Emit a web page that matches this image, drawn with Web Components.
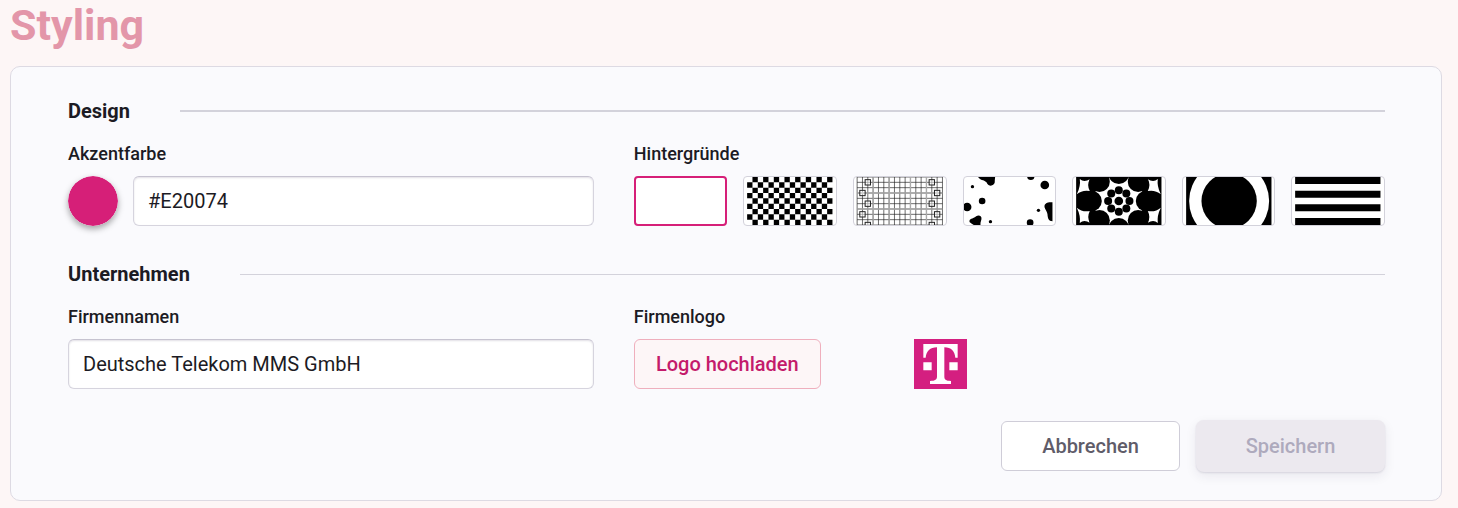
<!DOCTYPE html>
<html lang="de">
<head>
  <meta charset="utf-8">
  <meta name="viewport" content="width=device-width, initial-scale=1">
  <title>Styling</title>
  <style>
    :root {
      --accent: #d61f78;
      --text: #1c1b24;
      --line: #d3d2db;
      --surface: #fafafd;
    }
    body {
      margin: 0;
      background: #fdf6f6;
      color: var(--text);
      font-family: Roboto, "Liberation Sans", sans-serif;
    }
  </style>
</head>
<body>
  <styling-page heading="Styling">
    <form-section heading="Design" strong>
      <text-field label="Akzentfarbe" value="#E20074">
        <color-swatch value="#d61f78" label="Akzentfarbe wählen"></color-swatch>
      </text-field>
      <background-picker label="Hintergründe"></background-picker>
    </form-section>
    <form-section heading="Unternehmen">
      <text-field label="Firmennamen" value="Deutsche Telekom MMS GmbH"></text-field>
      <logo-upload label="Firmenlogo"></logo-upload>
    </form-section>
    <app-button slot="actions">Abbrechen</app-button>
    <app-button slot="actions" variant="primary" disabled>Speichern</app-button>
  </styling-page>

  <script>
    // Shared by every labelled control
    const labelStyles = `
      .label {
        display: block;
        margin-bottom: 9px;
        padding: 0;
        font-size: 18px;
        font-weight: 500;
        line-height: 26px;
      }
    `;

    /**
     * @class StylingPage
     * Page title and the card that holds the form.
     *
     * @property {string} heading - The page title.
     */
    class StylingPage extends HTMLElement {
      constructor() {
        super();
        this.attachShadow({ mode: 'open' }).innerHTML = `
          <style>
            :host {
              display: block;
              padding: 0 16px 7px 10px;
            }
            h1 {
              margin: 0 0 16px;
              color: #e396a9;
              font-size: 43px;
              font-weight: 700;
              line-height: 50px;
            }
            form {
              padding: 32px 56px 28px 57px;
              background: var(--surface);
              border: 1px solid #dddae3;
              border-radius: 10px;
            }
            footer {
              display: flex;
              justify-content: flex-end;
              align-items: center;
              gap: 16px;
              margin-top: 31px;
            }
          </style>
          <h1>${this.getAttribute('heading')}</h1>
          <form>
            <slot></slot>
            <footer><slot name="actions"></slot></footer>
          </form>
        `;
      }
    }

    /**
     * @class FormSection
     * Heading with a rule, and two columns of fields below it.
     *
     * @property {string} heading - The section heading.
     * @property {boolean} strong - Draws a thicker rule.
     */
    class FormSection extends HTMLElement {
      constructor() {
        super();
        this.attachShadow({ mode: 'open' }).innerHTML = `
          <style>
            :host { display: block; }
            :host(:not([strong])) { margin-top: 36px; }
            header {
              display: flex;
              align-items: center;
              gap: 50px;
              margin-bottom: 18px;
            }
            h2 {
              margin: 0;
              font-size: 20px;
              font-weight: 700;
              line-height: 24px;
            }
            hr {
              flex: 1;
              margin: 0;
              border: 0;
              border-top: 1px solid var(--line);
            }
            :host([strong]) hr { border-top-width: 2px; }
            .fields {
              display: grid;
              grid-template-columns: 7fr 10fr;
              column-gap: 40px;
            }
          </style>
          <header><h2>${this.getAttribute('heading')}</h2><hr></header>
          <div class="fields"><slot></slot></div>
        `;
      }
    }

    /**
     * @class TextField
     * Labelled text input. Slotted content sits in front of the input.
     */
    class TextField extends HTMLElement {
      constructor() {
        super();
        this.attachShadow({ mode: 'open' }).innerHTML = `
          <style>
            ${labelStyles}
            :host { display: block; min-width: 0; }
            .row { display: flex; gap: 15px; }
            input {
              flex: 1;
              min-width: 0;
              height: 50px;
              box-sizing: border-box;
              padding: 0 14px;
              border: 1px solid #d6d4de;
              border-top-color: #c6c3d0;
              border-radius: 6px;
              background: #fff;
              box-shadow: inset 0 1px 2px rgba(40, 30, 70, 0.14);
              color: inherit;
              font: 400 20px/24px Roboto, "Liberation Sans", sans-serif;
            }
          </style>
          <label class="label" for="field">${this.getAttribute('label')}</label>
          <div class="row">
            <slot></slot>
            <input id="field" type="text" value="${this.getAttribute('value') || ''}">
          </div>
        `;
      }
    }

    /**
     * @class ColorSwatch
     * Round colour input.
     */
    class ColorSwatch extends HTMLElement {
      constructor() {
        super();
        this.attachShadow({ mode: 'open' }).innerHTML = `
          <style>
            :host { display: block; }
            input {
              appearance: none;
              display: block;
              width: 50px;
              height: 50px;
              padding: 0;
              border: 0;
              border-radius: 50%;
              background: none;
              box-shadow: 0 3px 6px rgba(0, 0, 0, 0.35);
              cursor: pointer;
            }
            input::-webkit-color-swatch-wrapper { padding: 0; }
            input::-webkit-color-swatch { border: 0; border-radius: 50%; }
          </style>
          <input type="color" value="${this.getAttribute('value')}" aria-label="${this.getAttribute('label')}">
        `;
      }
    }

    const circles = (list) =>
      list.map(([x, y, r]) => `<circle cx="${x}" cy="${y}" r="${r}"/>`).join('');

    // n points on a circle round the centre of a 256x144 tile
    const ring = (n, distance, r) =>
      Array.from({ length: n }, (_, i) => {
        const angle = (i * 2 * Math.PI) / n;
        return [128 + distance * Math.cos(angle), 72 + distance * Math.sin(angle), r];
      });

    function checkerPattern() {
      let d = '';
      for (let row = 0; row < 9; row++) {
        for (let col = (row + 1) % 2; col < 16; col += 2) {
          d += `M${col * 16} ${row * 16}h16v16h-16z`;
        }
      }
      return `<path d="${d}"/>`;
    }

    function gridPattern() {
      let thin = '';
      for (let x = 0; x <= 256; x += 16) thin += `M${x} 0V144`;
      for (let y = 0; y <= 144; y += 16) thin += `M0 ${y}H256`;
      const nodes = [];
      for (let i = 0; i < 5; i++) {
        const y = 16 + i * 32;
        nodes.push(i % 2 ? [16, y] : [32, y], i % 2 ? [240, y] : [224, y]);
      }
      // The last nodes are cut by the lower edge
      const boxes = nodes
        .map(([x, y]) => `<rect x="${x - 8}" y="${y - 8}" width="16" height="16"/>`)
        .join('');
      return `
        <path d="${thin}" fill="none" stroke="#222" stroke-width="2"/>
        <path d="M48 0V144M96 0V144M160 0V144M208 0V144M0 48H256M0 96H256" stroke="#aaa" stroke-width="4"/>
        <g fill="#fff" fill-opacity=".5" stroke="#222" stroke-width="3">${boxes}</g>
      `;
    }

    function spotsPattern() {
      return circles([
        [16, 29, 5], [45, 72, 10], [0, 90, 13], [70, 134, 5],
        [191, -2, 11], [233, 24, 13], [214, 100, 5], [189, 137, 10]
      ]) + `
        <path d="M33 0C38 10 50 8 58 16C62 24 66 26 71 26C80 25 84 20 83 10L84 0Z"/>
        <path d="M7 131C10 124 20 125 27 118C34 113 43 116 43 123C44 130 39 134 40 144H20C14 138 6 138 7 131Z"/>
        <path d="M256 76C244 74 232 78 232 88C232 96 239 100 241 112C242 124 244 133 256 133Z"/>
      `;
    }

    function flowerPattern() {
      const star = 'M11 6Q24 18 42 6Q31 22 41 42Q18 38 2 52Q14 28 11 6Z';
      const octagon = ring(8, 82, 0).map(([x, y]) => `${x},${y}`).join(' ');
      return `
        <path d="M0 0H256V144H0Z"/>
        <g fill="#fff">
          <polygon points="${octagon}"/>
          <path d="${star}"/>
          <path d="${star}" transform="translate(256 0) scale(-1 1)"/>
          <path d="${star}" transform="translate(0 144) scale(1 -1)"/>
          <path d="${star}" transform="translate(256 144) scale(-1 -1)"/>
        </g>
        ${circles(ring(8, 82, 31))}
        ${circles(ring(8, 32, 12))}
        ${circles([[128, 72, 13]])}
      `;
    }

    const backgrounds = [
      { name: 'Leer', art: '' },
      { name: 'Schachbrett', art: checkerPattern() },
      { name: 'Raster', art: gridPattern() },
      { name: 'Flecken', art: spotsPattern() },
      { name: 'Blüte', art: flowerPattern() },
      {
        name: 'Kreis',
        art: `<path d="M0 0H256V144H0Z"/><circle cx="129" cy="72" r="120" fill="#fff"/><circle cx="129" cy="72" r="83"/>`
      },
      { name: 'Streifen', art: '<path d="M0 0H256V21H0ZM0 41H256V62H0ZM0 82H256V103H0ZM0 123H256V144H0Z"/>' }
    ];

    /**
     * @class BackgroundPicker
     * Row of background tiles, one of which is selected.
     */
    class BackgroundPicker extends HTMLElement {
      constructor() {
        super();
        const tiles = backgrounds.map((item, i) => `
          <label class="tile">
            <input type="radio" name="background" aria-label="${item.name}" ${i === 0 ? 'checked' : ''}>
            <svg viewBox="0 0 256 144" aria-hidden="true">${item.art}</svg>
          </label>
        `).join('');

        this.attachShadow({ mode: 'open' }).innerHTML = `
          <style>
            ${labelStyles}
            :host { display: block; min-width: 0; }
            fieldset { min-width: 0; margin: 0; padding: 0; border: 0; }
            .tiles {
              display: grid;
              grid-template-columns: repeat(7, 1fr);
              gap: 16px;
            }
            .tile {
              display: grid;
              height: 50px;
              box-sizing: border-box;
              border: 1px solid var(--line);
              border-radius: 4px;
              background: #fff;
              overflow: hidden;
              cursor: pointer;
            }
            .tile:has(:checked) { border: 2px solid var(--accent); }
            .tile > * { grid-area: 1 / 1; }
            input { appearance: none; margin: 0; outline: 0; }
            svg { width: 100%; height: 100%; min-height: 0; overflow: hidden; }
          </style>
          <fieldset>
            <legend class="label">${this.getAttribute('label')}</legend>
            <div class="tiles">${tiles}</div>
          </fieldset>
        `;
      }
    }

    /**
     * @class LogoUpload
     * Upload button with a preview of the current logo.
     */
    class LogoUpload extends HTMLElement {
      constructor() {
        super();
        this.attachShadow({ mode: 'open' }).innerHTML = `
          <style>
            ${labelStyles}
            :host { display: block; min-width: 0; }
            .row { display: flex; align-items: center; gap: 93px; }
            svg { display: block; width: 53px; height: 50px; }
          </style>
          <span class="label" id="label">${this.getAttribute('label')}</span>
          <div class="row" role="group" aria-labelledby="label">
            <app-button variant="accent">Logo hochladen</app-button>
            <svg viewBox="0 0 159 150" role="img" aria-label="Firmenlogo">
              <path fill="#d41f80" d="M0 0H159V150H0Z"/>
              <path fill="#fff" d="M28 15H131V56H124C122 36 112 25 91 25V112C91 122 95 126 111 126V135H48V126C64 126 69 122 69 112V25C48 25 37 36 35 56H28ZM28 70H53V94H28ZM106 70H131V94H106Z"/>
            </svg>
          </div>
        `;
      }
    }

    /**
     * @class AppButton
     * @property {string} variant - "primary", "accent" or none for the plain look.
     * @property {boolean} disabled
     */
    class AppButton extends HTMLElement {
      constructor() {
        super();
        const disabled = this.hasAttribute('disabled') ? 'disabled' : '';
        this.attachShadow({ mode: 'open' }).innerHTML = `
          <style>
            :host { display: block; }
            button {
              display: block;
              height: 50px;
              min-width: 179px;
              padding: 0 20px;
              border: 1px solid #cfcdd8;
              border-radius: 6px;
              background: #fff;
              color: #5f5c69;
              font: 500 20px/24px Roboto, "Liberation Sans", sans-serif;
              cursor: pointer;
            }
            :host([variant="accent"]) button {
              min-width: 187px;
              border-color: #efafbd;
              background: #fdf6f7;
              color: #c41b6b;
            }
            :host([variant="primary"]) button {
              height: 52px;
              min-width: 189px;
              border: 0;
              border-radius: 8px;
              background: #ece9ef;
              color: #aeaabd;
              box-shadow: 0 1px 2px rgba(40, 30, 70, 0.12), 0 4px 12px rgba(40, 30, 70, 0.08);
              cursor: default;
            }
          </style>
          <button type="button" ${disabled}><slot></slot></button>
        `;
      }
    }

    customElements.define('app-button', AppButton);
    customElements.define('color-swatch', ColorSwatch);
    customElements.define('text-field', TextField);
    customElements.define('background-picker', BackgroundPicker);
    customElements.define('logo-upload', LogoUpload);
    customElements.define('form-section', FormSection);
    customElements.define('styling-page', StylingPage);
  </script>
</body>
</html>
